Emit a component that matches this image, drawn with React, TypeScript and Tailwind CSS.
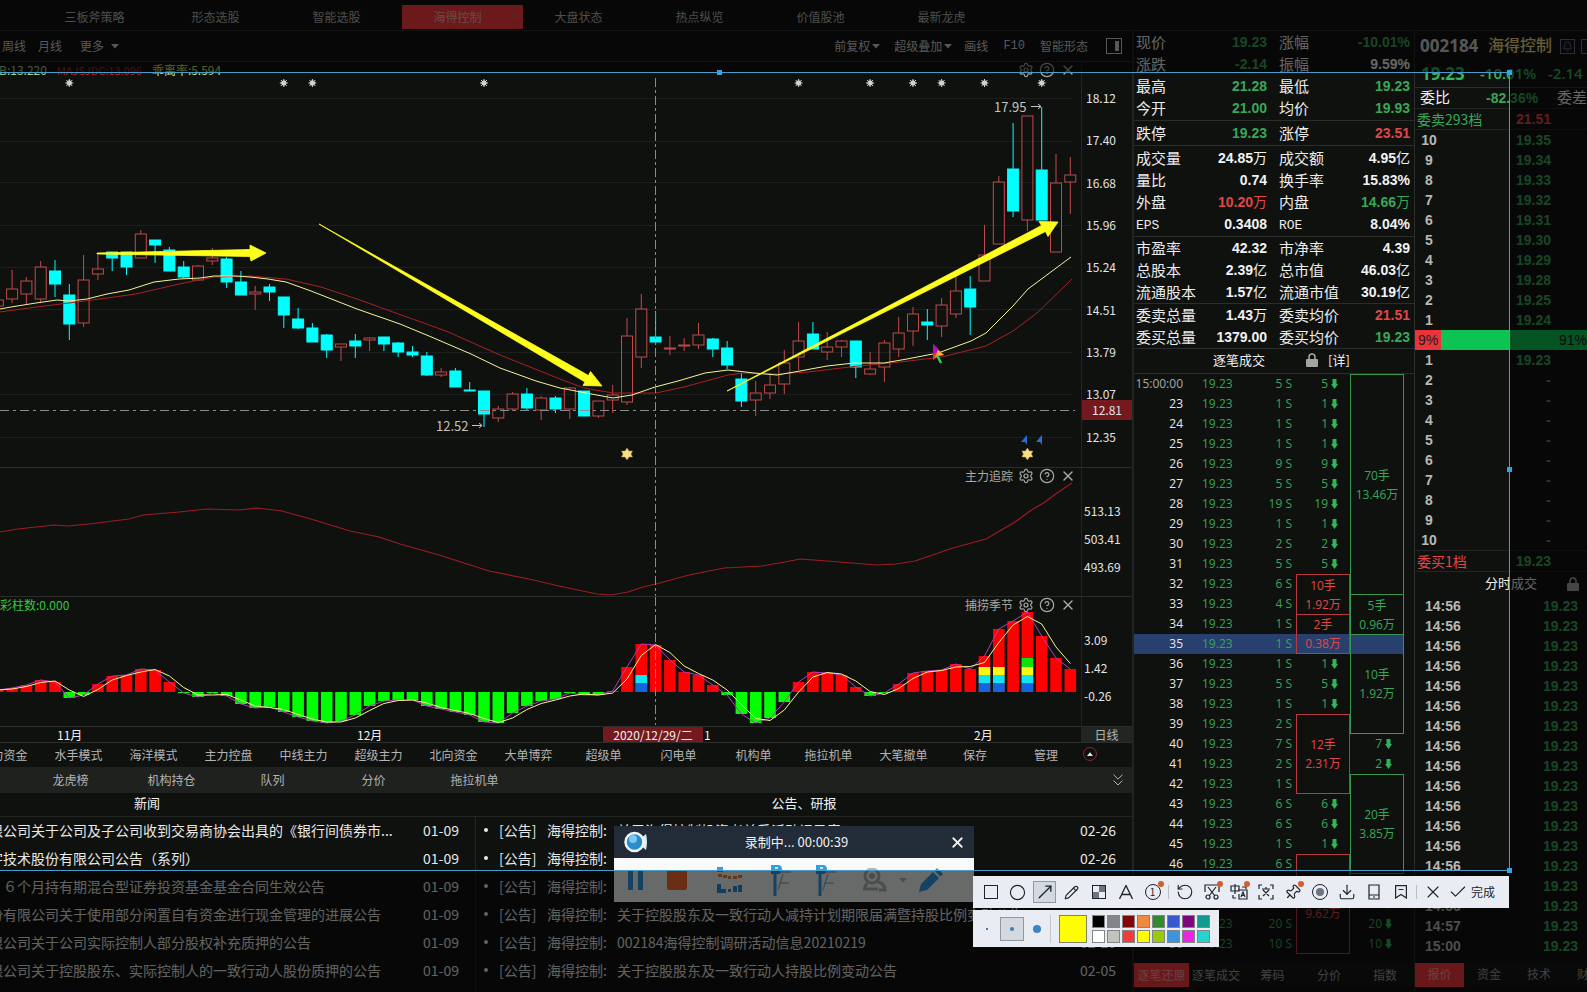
import type { ReactNode } from 'react'
import {
  Bell,
  Check,
  ChevronsDown,
  Circle,
  CircleHelp,
  Download,
  MoveUpRight,
  Pencil,
  Pin,
  RotateCcw,
  Settings,
  Square,
  X,
} from 'lucide-react'

const TABS = ['板块选股', '三板斧策略', '形态选股', '智能选股', '海得控制', '大盘状态', '热点纵览', '价值股池', '最新龙虎']

// [kind, high, body top, body bottom, low]
type Candle = ['r' | 'c', number, number, number, number]

const CANDLES: Candle[] = [
  ['r', 300, 300, 306, 306], ['r', 270, 289, 299, 303], ['r', 277, 281, 294, 305], ['r', 261, 267, 299, 303],
  ['c', 260, 271, 284, 297], ['c', 284, 295, 324, 340], ['r', 255, 280, 323, 327], ['r', 255, 269, 274, 280],
  ['c', 252, 252, 258, 271], ['c', 252, 252, 267, 275], ['r', 230, 234, 258, 258], ['c', 240, 240, 245, 263],
  ['c', 247, 250, 271, 271], ['c', 261, 267, 277, 278], ['r', 265, 266, 280, 280], ['r', 248, 258, 261, 265],
  ['c', 257, 259, 282, 288], ['c', 271, 282, 295, 295], ['r', 286, 292, 294, 310], ['c', 284, 287, 292, 301],
  ['c', 297, 297, 315, 328], ['c', 308, 319, 328, 329], ['c', 323, 328, 342, 342], ['c', 334, 335, 350, 358],
  ['r', 344, 344, 347, 361], ['c', 334, 341, 346, 358], ['r', 337, 338, 340, 351], ['c', 337, 337, 344, 351],
  ['c', 342, 343, 352, 357], ['c', 346, 352, 355, 357], ['c', 352, 356, 375, 376], ['r', 368, 372, 375, 377],
  ['c', 368, 371, 387, 387], ['c', 382, 390, 391, 391], ['c', 391, 391, 414, 427], ['r', 406, 409, 418, 422],
  ['r', 392, 394, 409, 411], ['c', 388, 394, 408, 410], ['r', 396, 398, 410, 420], ['c', 396, 398, 409, 413],
  ['r', 387, 388, 409, 419], ['c', 391, 391, 416, 416], ['r', 401, 401, 416, 418], ['r', 385, 395, 400, 413],
  ['r', 318, 336, 402, 405], ['r', 294, 309, 357, 368], ['c', 311, 337, 342, 345], ['r', 336, 348, 349, 355],
  ['r', 338, 345, 346, 351], ['r', 323, 335, 345, 349], ['c', 338, 339, 349, 357], ['c', 341, 348, 365, 369],
  ['c', 373, 379, 401, 407], ['r', 381, 393, 400, 416], ['r', 373, 385, 393, 399], ['r', 350, 363, 384, 394],
  ['r', 322, 341, 357, 370], ['c', 322, 334, 349, 349], ['r', 332, 347, 352, 360], ['r', 340, 341, 347, 357],
  ['c', 341, 341, 367, 378], ['r', 352, 369, 374, 375], ['r', 340, 343, 367, 382], ['r', 317, 333, 349, 357],
  ['r', 307, 314, 331, 346], ['c', 309, 322, 325, 340], ['r', 298, 305, 326, 337], ['r', 276, 291, 314, 318],
  ['c', 276, 289, 307, 335], ['r', 225, 255, 281, 281], ['r', 176, 182, 244, 244], ['c', 123, 169, 211, 217],
  ['r', 116, 116, 220, 231], ['c', 107, 170, 220, 220], ['r', 154, 183, 252, 252], ['r', 157, 175, 182, 214],
]

const MACD = [
  690, 688, 685, 680, 682, 698, 695, 684, 676, 675, 669, 670, 682, 693, 697, 693, 696, 704, 708, 707, 712, 717, 721,
  723, 721, 715, 706, 701, 700, 700, 706, 709, 712, 715, 722, 723, 713, 706, 701, 699, 693, 695, 695, 691, 667, 644,
  645, 660, 672, 675, 685, 695, 714, 723, 718, 702, 682, 672, 673, 675, 687, 696, 693, 684, 673, 671, 670, 664, 669,
  656, 629, 621, 612, 636, 658, 669,
]
const ZERO = 692

const MA_FAST =
  '0,309 11,307 36,303 57,300 69,301 87,299 107,294 129,290 154,282 179,279 200,278 214,276 236,276 250,277 268,279 286,282 311,291 357,309 400,324 429,336 471,354 500,368 536,381 560,388 586,393 613,398 632,395 655,387 678,381 705,373 728,370 754,373 777,375 800,371 827,366 854,363 884,363 907,359 938,353 971,341 986,333 1013,306 1028,289 1071,257'
const MA_SLOW =
  '0,312 36,307 69,303 107,298 136,294 179,284 214,277 250,276 286,279 321,287 357,299 393,312 446,331 500,355 560,379 584,388 613,393 656,393 684,387 728,375 743,373 777,374 808,372 858,366 900,362 942,357 986,346 1013,331 1037,313 1072,279'
const TREND =
  '0,532 18,529 54,525 68,526 89,524 129,519 143,515 179,512 207,509 239,510 257,508 282,511 311,519 350,531 379,537 400,544 439,555 489,571 529,579 559,586 597,594 611,595 628,592 643,587 656,584 689,575 724,568 762,566 785,562 800,559 827,561 877,565 896,564 915,561 953,548 986,539 1015,522 1030,511 1045,502 1057,493 1072,483'

const cx = (i: number) => -2.2 + 14.3 * i

const STATS: [string, string, string, string, string, string][][] = [
  [
    ['现价', '19.23', 'g', '涨幅', '-10.01%', 'g'],
    ['涨跌', '-2.14', 'g', '振幅', '9.59%', 'w'],
    ['最高', '21.28', 'g', '最低', '19.23', 'g'],
    ['今开', '21.00', 'g', '均价', '19.93', 'g'],
  ],
  [['跌停', '19.23', 'g', '涨停', '23.51', 'r']],
  [
    ['成交量', '24.85万', 'w', '成交额', '4.95亿', 'w'],
    ['量比', '0.74', 'w', '换手率', '15.83%', 'w'],
    ['外盘', '10.20万', 'r', '内盘', '14.66万', 'g'],
    ['EPS', '0.3408', 'w', 'ROE', '8.04%', 'w'],
  ],
  [
    ['市盈率', '42.32', 'w', '市净率', '4.39', 'w'],
    ['总股本', '2.39亿', 'w', '总市值', '46.03亿', 'w'],
    ['流通股本', '1.57亿', 'w', '流通市值', '30.19亿', 'w'],
  ],
  [
    ['委卖总量', '1.43万', 'w', '委卖均价', '21.51', 'r'],
    ['委买总量', '1379.00', 'w', '委买均价', '19.23', 'g'],
  ],
]
const GROUP_PAD = ['pb-px', 'py-px', 'py-px', '', '']
const TONE: Record<string, string> = { g: 'text-[#3aa657]', r: 'text-[#e0474a]', w: 'text-[#f2f2f2]' }

type Merge = { span: number; lots: string; sum: string; last?: boolean; fill?: string }
type Tick = { t: string; v: string; a?: string | Merge; b?: string | Merge }

const TICKS: Tick[] = [
  { t: '15:00:00', v: '5', a: '5', b: { span: 11, lots: '70手', sum: '13.46万' } },
  { t: '23', v: '1', a: '1' },
  { t: '24', v: '1', a: '1' },
  { t: '25', v: '1', a: '1' },
  { t: '26', v: '9', a: '9' },
  { t: '27', v: '5', a: '5' },
  { t: '28', v: '19', a: '19' },
  { t: '29', v: '1', a: '1' },
  { t: '30', v: '2', a: '2' },
  { t: '31', v: '5', a: '5' },
  { t: '32', v: '6', a: { span: 2, lots: '10手', sum: '1.92万' } },
  { t: '33', v: '4', b: { span: 2, lots: '5手', sum: '0.96万' } },
  {
    t: '34',
    v: '1',
    a: { span: 2, lots: '2手', sum: '0.38万', last: true, fill: 'bg-[linear-gradient(transparent_19px,#28406e_19px)]' },
  },
  {
    t: '35',
    v: '1',
    b: { span: 5, lots: '10手', sum: '1.92万', last: true, fill: 'bg-[linear-gradient(#28406e_19px,#0f110f_19px)]' },
  },
  { t: '36', v: '1', a: '1' },
  { t: '37', v: '5', a: '5' },
  { t: '38', v: '1', a: '1' },
  { t: '39', v: '2', a: { span: 4, lots: '12手', sum: '2.31万', last: true } },
  { t: '40', v: '7', b: '7' },
  { t: '41', v: '2', b: '2' },
  { t: '42', v: '1', b: { span: 5, lots: '20手', sum: '3.85万', last: true } },
  { t: '43', v: '6', a: '6' },
  { t: '44', v: '6', a: '6' },
  { t: '45', v: '1', a: '1' },
  { t: '46', v: '6', a: { span: 5, lots: '50手', sum: '9.62万', last: true } },
  { t: '47', v: '4', b: '4' },
  { t: '48', v: '10', b: '10' },
  { t: '49', v: '20', b: '20' },
  { t: '50', v: '10', b: '10' },
]

const ASKS = [
  ['10', '19.35'], ['9', '19.34'], ['8', '19.33'], ['7', '19.32'], ['6', '19.31'],
  ['5', '19.30'], ['4', '19.29'], ['3', '19.28'], ['2', '19.25'], ['1', '19.24'],
]
const BIDS = [
  ['1', '19.23'], ['2', '-'], ['3', '-'], ['4', '-'], ['5', '-'],
  ['6', '-'], ['7', '-'], ['8', '-'], ['9', '-'], ['10', '-'],
]
const TRADES = [...Array(16).fill('14:56'), '14:57', '15:00'] as string[]

const INDICATORS = [
  '主力资金', '水手模式', '海洋模式', '主力控盘', '中线主力', '超级主力', '北向资金',
  '大单博弈', '超级单', '闪电单', '机构单', '拖拉机单', '大笔撤单',
]

const NEWS = [
  '限公司关于公司及子公司收到交易商协会出具的《银行间债券市...',
  '字技术股份有限公司公告（系列）',
  '２６个月持有期混合型证券投资基金基金合同生效公告',
  '份有限公司关于使用部分闲置自有资金进行现金管理的进展公告',
  '限公司关于公司实际控制人部分股权补充质押的公告',
  '限公司关于控股股东、实际控制人的一致行动人股份质押的公告',
]
const NOTICES = [
  ['关于海得控制投资者关系活动记录表', '02-26'],
  ['关于控股股东股份变动公告', '02-26'],
  ['关于权益变动的提示公告', '02-26'],
  ['关于控股股东及一致行动人减持计划期限届满暨持股比例变动公告', '02-26'],
  ['002184海得控制调研活动信息20210219', '02-20'],
  ['关于控股股东及一致行动人持股比例变动公告', '02-05'],
]

const SWATCHES = [
  'bg-black', 'bg-[#84858a]', 'bg-[#840408]', 'bg-[#f08840]', 'bg-[#348830]', 'bg-[#3858d0]', 'bg-[#80047c]', 'bg-[#109a90]',
  'bg-white', 'bg-[#c0c4c0]', 'bg-[#f03c3c]', 'bg-[#ffff00]', 'bg-[#98cc08]', 'bg-[#3c94dc]', 'bg-[#ec24e4]', 'bg-[#24d4d0]',
]

function Caret() {
  return (
    <svg viewBox="0 0 8 5" className="h-[5px] w-2 fill-current">
      <path d="M0 0h8L4 4.5z" />
    </svg>
  )
}

function DownArrow() {
  return (
    <svg viewBox="0 0 7 10" className="h-[10px] w-[7px] fill-[#2fb457]">
      <path d="M1.500 0h4v5h1.500L3.500 10 0 5h1.500z" />
    </svg>
  )
}

function Padlock() {
  return (
    <svg viewBox="0 0 12 14" className="h-[14px] w-3">
      <path d="M3 7V4Q3 1 6 1T9 4V7" fill="none" stroke="#a4a4a4" strokeWidth={1.6} />
      <rect y={6} width={12} height={8} rx={1} fill="#a4a4a4" />
    </svg>
  )
}

function PanelTools({ title }: { title?: string }) {
  return (
    <div className="absolute top-0 right-[5px] flex h-4 items-center gap-[5px] text-xs text-[#a8a8a8]">
      {title && <span>{title}</span>}
      <button aria-label="设置"><Settings size={16} strokeWidth={1.8} /></button>
      <button aria-label="帮助"><CircleHelp size={16} strokeWidth={1.8} /></button>
      <button aria-label="关闭"><X size={16} strokeWidth={2} /></button>
    </div>
  )
}

function ChartPanel({ children, axis, tools }: { children: ReactNode; axis: ReactNode; tools: ReactNode }) {
  return (
    <div className="flex border-b border-[#2b2d2b]">
      <div className="relative min-w-0 flex-1">
        {children}
        {tools}
      </div>
      <div className="relative w-[51px] border-l border-[#222422] text-xs text-[#e4e4e4]">{axis}</div>
    </div>
  )
}

function Crosshair({ y1, y2 }: { y1: number; y2: number }) {
  return <line x1={655.5} x2={655.5} y1={y1} y2={y2} stroke="#8a8c8a" strokeDasharray="9 3 3 3" />
}

function KLine() {
  return (
    <svg viewBox="0 62 1081 405" preserveAspectRatio="none" className="block h-[405px] w-full">
      {[98.5, 141.5, 182.5, 225.5, 267.5, 309.5, 352.5, 394.5, 437.5].map((y) => (
        <line key={y} x1={0} x2={1072} y1={y} y2={y} stroke="#1c1f1d" />
      ))}
      {[5, 20, 22, 34, 56, 61, 64, 66, 69, 73].map((i) => (
        <g key={i} transform={`translate(${cx(i)} 83)`} stroke="#d0d0d0">
          <circle r={2.2} fill="#e0e0e0" />
          <path d="M-4 0H4M0-4V4M-3-3L3 3M3-3L-3 3" />
        </g>
      ))}
      {CANDLES.map(([kind, hi, top, bot, lo], i) => {
        const x = cx(i)
        const color = kind === 'c' ? '#00ffff' : '#c04a4a'
        return (
          <g key={i} stroke={color}>
            <path d={`M${x} ${hi}V${top}M${x} ${bot}V${lo}`} />
            <rect
              x={x - 5.5}
              y={top}
              width={11}
              height={bot - top}
              fill={kind === 'c' ? color : 'none'}
            />
          </g>
        )
      })}
      <polyline points={MA_SLOW} fill="none" stroke="#a82024" />
      <polyline points={MA_FAST} fill="none" stroke="#f4f49a" />
      <line x1={0} x2={1075} y1={410.5} y2={410.5} stroke="#8a8c8a" strokeDasharray="9 4 3 4" />
      <Crosshair y1={78} y2={467} />
      {/* hand drawn trend arrows */}
      <g fill="#ffff1e" stroke="#ffff1e" strokeWidth={0.8}>
        <path d="M97 253L250 249.500V245L266 253L251 261L250 256.500L97 254z" />
        <path d="M319 224L588.5 375.5L590.5 371.5L602 386L583 385.5L585 382z" />
        <path d="M727 391L1041.5 225.500L1039 221.5L1058 222L1048 236.5L1045.5 231.500z" />
      </g>
      <g fill="#f7df86" stroke="#b98a30" strokeWidth={0.5}>
        {[44, 72].map((i) => (
          <path key={i} transform={`translate(${cx(i)} 454)`} d="M0-6L2-3H5.5L4 0L5.5 3H2L0 6L-2 3H-5.500L-4 0L-5.500-3H-2z" />
        ))}
      </g>
      <g fill="#2a6ed8">
        <path d="M1021 442L1027 435V445L1025 442z" />
        <path d="M1036 442L1042 435V445L1040 442z" />
      </g>
      <g fontSize={13} fill="#c4c4c4">
        <text x={436} y={431}>12.52</text>
        <text x={994} y={112}>17.95</text>
      </g>
      <g stroke="#c4c4c4" fill="none">
        <path d="M472 425.500H482M479 423L482 425.500L479 428" />
        <path d="M1031 106.500H1041M1038 104L1041 106.500L1038 109" />
      </g>
      {/* pointer */}
      <path d="M933 344L944 355L938 356L933 360z" fill="#ff3030" />
      <path d="M933 344L939 350L933 355z" fill="#b010d0" />
      <path d="M938 356L944 355L938 350L935 358z" fill="#ffb040" />
      <path d="M937 355L941 363" stroke="#30d060" strokeWidth={2.5} />
    </svg>
  )
}

function Macd() {
  const dif = MACD.map((y, i) => `${cx(i)},${y}`).join(' ')
  const dea = MACD.map((y, i) => `${cx(i)},${(y + MACD[Math.max(i - 1, 0)]) / 2}`).join(' ')
  return (
    <svg viewBox="0 597 1081 129" preserveAspectRatio="none" className="block h-[129px] w-full">
      {MACD.map((y, i) => (
        <rect
          key={i}
          x={cx(i) - 5.8}
          y={Math.min(y, ZERO)}
          width={11.6}
          height={Math.max(1, Math.abs(y - ZERO))}
          fill={y < ZERO ? '#ff0000' : '#00ff00'}
        />
      ))}
      {[45, 69, 70, 72].map((i) => (
        <g key={i}>
          <rect x={cx(i) - 5.8} y={683} width={11.6} height={9} fill="#1464e0" />
          <rect x={cx(i) - 5.8} y={675} width={11.6} height={8} fill="#10e4f0" />
          {i > 45 && <rect x={cx(i) - 5.8} y={667} width={11.6} height={8} fill="#f8f810" />}
          {i === 72 && <rect x={cx(i) - 5.8} y={658} width={11.6} height={9} fill="#10e010" />}
        </g>
      ))}
      <polyline points={dif} fill="none" stroke="#b03cb8" />
      <polyline points={dea} fill="none" stroke="#fbf58c" />
      <Crosshair y1={597} y2={725} />
    </svg>
  )
}

function ChartColumn() {
  return (
    <section className="flex min-w-0 flex-1 flex-col">
      <div className="flex h-[31px] items-center border-b border-[#2b2d2b] text-xs text-[#d0d0d0]">
        <div className="flex items-center pl-[2px]">
          <button>周线</button>
          <button className="ml-3">月线</button>
          <button className="ml-[18px] flex items-center gap-[7px]">更多 <Caret /></button>
        </div>
        <div className="ml-auto flex items-center pr-[10px]">
          <button className="flex items-center gap-[2px]">前复权 <Caret /></button>
          <button className="ml-[14px] flex items-center gap-[2px]">超级叠加 <Caret /></button>
          <button className="ml-[12px]">画线</button>
          <button className="ml-[15px] font-['Liberation_Mono',monospace]">F10</button>
          <button className="ml-[15px]">智能形态</button>
          <button aria-label="侧栏" className="ml-[18px] flex h-4 w-4 items-center justify-end border border-current pr-[2px]">
            <span className="h-[10px] w-1 bg-current" />
          </button>
        </div>
      </div>

      <ChartPanel
        tools={
          <>
            <div className="absolute top-0 left-[-1px] flex h-4 items-center gap-[10px] text-xs">
              <span className="text-[#a9d084]">B:13.220</span>
              <span className="text-[11px] text-[#c02024]">MAJSJDC:13.096</span>
              <span className="text-[#c9e864]">乖离率:5.594</span>
            </div>
            <PanelTools />
          </>
        }
        axis={
          <>
            <div className="grid h-[396px] grid-rows-9 items-center pt-[15px] pl-1">
              {['18.12', '17.40', '16.68', '15.96', '15.24', '14.51', '13.79', '13.07', '12.35'].map((v) => (
                <span key={v}>{v}</span>
              ))}
            </div>
            <div className="absolute top-[338px] left-0 flex h-5 w-full items-center justify-center bg-[#741a1e]">12.81</div>
          </>
        }
      >
        <KLine />
      </ChartPanel>

      <ChartPanel
        tools={<PanelTools title="主力追踪" />}
        axis={
          <div className="flex flex-col pt-[29px] pl-[2px] leading-7">
            <span>513.13</span>
            <span>503.41</span>
            <span>493.69</span>
          </div>
        }
      >
        <svg viewBox="0 468 1081 128" preserveAspectRatio="none" className="block h-32 w-full">
          <polyline points={TREND} fill="none" stroke="#9c1c22" strokeWidth={1.2} />
          <Crosshair y1={468} y2={596} />
        </svg>
      </ChartPanel>

      <ChartPanel
        tools={
          <>
            <span className="absolute top-0 left-0 text-xs text-[#32c83c]">彩柱数:0.000</span>
            <PanelTools title="捕捞季节" />
          </>
        }
        axis={
          <div className="flex flex-col pt-[29px] pl-[2px] leading-7">
            <span>3.09</span>
            <span>1.42</span>
            <span>-0.26</span>
          </div>
        }
      >
        <Macd />
      </ChartPanel>

      <div className="flex h-4 border-b border-[#2b2d2b] text-xs leading-[15px] text-[#f0f0f0]">
        <div className="relative flex-1">
          <span className="absolute left-[57px]">11月</span>
          <span className="absolute left-[357px]">12月</span>
          <span className="absolute left-[603px] h-[15px] w-[100px] bg-[#741a1e] text-center">2020/12/29/二</span>
          <span className="absolute left-[704px]">1</span>
          <span className="absolute left-[974px]">2月</span>
        </div>
        <button className="w-[51px] bg-[#232523] text-[#b4b4b4]">日线</button>
      </div>

      <div className="flex h-6 items-center text-xs text-[#b4b4b4]">
        <div className="-ml-[34px] flex">
          {INDICATORS.map((name) => (
            <button key={name} className="w-[75px]">{name}</button>
          ))}
          <button className="w-[68px]">保存</button>
          <button className="w-[74px]">管理</button>
          <button aria-label="收起" className="flex h-[14px] w-[14px] items-center justify-center rounded-full border border-[#8c2430]">
            <svg viewBox="0 0 8 5" className="h-1 w-[6px] fill-[#e8e8e8]"><path d="M0 5h8L4 0z" /></svg>
          </button>
        </div>
      </div>

      <div className="flex h-[26px] items-center bg-[#1f211f] pl-5 text-xs text-[#b4b4b4]">
        {['龙虎榜', '机构持仓', '队列', '分价', '拖拉机单'].map((name) => (
          <button key={name} className="w-[101px]">{name}</button>
        ))}
        <button aria-label="展开" className="mr-1 ml-auto"><ChevronsDown size={20} strokeWidth={1.2} /></button>
      </div>

      <div className="flex h-6 items-center border-b border-[#232523] pb-[3px] text-[13px] text-[#f0f0f0]">
        <h3 className="w-[476px] pr-[182px] text-center">新闻</h3>
        <h3 className="flex-1 text-center">公告、研报</h3>
      </div>

      <div className="flex flex-1 text-sm text-[#e8e8e8]">
        <ul className="-ml-[11px] w-[487px] shrink-0 border-r border-[#232523]">
          {NEWS.map((title) => (
            <li key={title} className="flex h-7 items-center justify-between pr-4 pb-[2px]">
              <a href="#" className="whitespace-nowrap">{title}</a>
              <span>01-09</span>
            </li>
          ))}
        </ul>
        <ul className="min-w-0 flex-1">
          {NOTICES.map(([title, date]) => (
            <li key={title} className="flex h-7 items-center pr-4 pb-[2px] pl-2">
              <span className="mr-[11px] h-1 w-1 rounded-full bg-current" />
              <a href="#" className="flex whitespace-nowrap">
                <span className="w-[48px]">[公告]</span>
                <span className="w-[70px]">海得控制:</span>
                <span>{title}</span>
              </a>
              <span className="ml-auto">{date}</span>
            </li>
          ))}
        </ul>
      </div>
    </section>
  )
}

function Value({ text, tone }: { text: string; tone: string }) {
  return (
    <dd className={`text-right font-['Liberation_Sans','Noto_Sans_CJK_SC',sans-serif] text-sm font-bold ${TONE[tone]}`}>
      {text.replace(/[万亿]/, '')}
      <span className="font-normal">{text.match(/[万亿]/)?.[0]}</span>
    </dd>
  )
}

function Label({ text }: { text: string }) {
  const latin = /^[A-Z]/.test(text)
  return (
    <dt className={latin ? "pt-[3px] font-['Liberation_Mono',monospace] text-[13px]" : 'whitespace-nowrap'}>{text}</dt>
  )
}

function TickCell({ cell, side }: { cell?: string | Merge; side: 'a' | 'b' }) {
  if (!cell) return null
  if (typeof cell === 'string') {
    return (
      <td className="pr-3 text-[#3aa657]">
        <span className="flex items-center justify-end gap-[3px]">{cell}<DownArrow /></span>
      </td>
    )
  }
  const tone = side === 'a' ? 'border-[#b83a40] text-[#e0474a]' : 'border-[#35964f] text-[#3aa657]'
  return (
    <td
      rowSpan={cell.span}
      className={`border-x border-t text-center leading-[19px] ${cell.last ? 'border-b' : ''} ${tone} ${cell.fill ?? ''}`}
    >
      <div>{cell.lots}</div>
      <div>{cell.sum}</div>
    </td>
  )
}

function QuoteColumn() {
  return (
    <section className="flex w-[282px] shrink-0 flex-col border-l-2 border-[#222422]">
      {STATS.map((rows, g) => (
        <dl key={g} className={`border-b border-[#2b2d2b] ${GROUP_PAD[g]}`}>
          {rows.map(([l1, v1, t1, l2, v2, t2]) => (
            <div key={l1} className="flex h-[22px] gap-3 pr-1 pl-[2px] text-[15px] text-[#ececec]">
              <div className="flex w-[131px] items-center justify-between">
                <Label text={l1} />
                <Value text={v1} tone={t1} />
              </div>
              <div className="flex flex-1 items-center justify-between">
                <Label text={l2} />
                <Value text={v2} tone={t2} />
              </div>
            </div>
          ))}
        </dl>
      ))}
      <div className="flex h-[25px] items-center border-b border-[#2b2d2b] pb-[2px] pl-[79px] text-[13px] text-[#f0f0f0]">
        <h3>逐笔成交</h3>
        <span className="ml-[41px]"><Padlock /></span>
        <button className="ml-[10px]">[详]</button>
      </div>
      <table className="w-[270px] table-fixed border-separate border-spacing-0 font-['Open_Sans','Noto_Sans_CJK_SC',sans-serif] text-xs leading-5">
        <colgroup>
          <col className="w-[49px]" />
          <col className="w-[68px]" />
          <col className="w-[45px]" />
          <col className="w-[54px]" />
          <col className="w-[54px]" />
        </colgroup>
        <tbody>
          {TICKS.map((row, i) => {
            const fill = row.t === '35' ? 'bg-[#28406e]' : ''
            return (
              <tr key={row.t} className="h-5">
                <td className={`text-right ${i === 0 ? 'text-[#a8a8a8]' : 'text-[#e8e8e8]'} ${fill}`}>{row.t}</td>
                <td className={`pl-[19px] text-[#3aa657] ${fill}`}>19.23</td>
                <td className={`pr-1 text-right text-[#3aa657] ${fill}`}>{row.v} S</td>
                <TickCell cell={row.a} side="a" />
                <TickCell cell={row.b} side="b" />
              </tr>
            )
          })}
        </tbody>
      </table>
      <div className="mt-auto mb-[5px] flex h-6 items-center bg-[#151715] text-xs text-[#9c9c9c]">
        <button className="h-full w-[55px] bg-[#f83a40] text-[#ff9c9c]">逐笔还原</button>
        <button className="w-[54px]">逐笔成交</button>
        <button className="w-[59px]">筹码</button>
        <button className="w-[54px]">分价</button>
        <button className="w-[58px]">指数</button>
      </div>
    </section>
  )
}

function LadderRow({ level, price }: { level: string; price: string }) {
  return (
    <div className="flex h-5 items-center">
      <span className="w-7 text-center text-[#b8b8b8]">{level}</span>
      <span className="w-[108px] text-right text-[#3aa657]">{price}</span>
    </div>
  )
}

function DepthColumn() {
  return (
    <section className="flex w-[173px] shrink-0 flex-col overflow-hidden border-l border-[#2b2d2b] font-['Liberation_Sans','Noto_Sans_CJK_SC',sans-serif] text-sm font-bold whitespace-nowrap">
      <div className="flex h-[30px] items-center pl-[5px]">
        <span className="w-[68px] shrink-0 font-['Open_Sans',sans-serif] text-[17px] text-[#d0d0d0]">002184</span>
        <span className="w-[72px] shrink-0 text-base font-medium text-[#eedc80]">海得控制</span>
        <button aria-label="预警" className="flex h-[15px] w-[15px] shrink-0 items-center justify-center border border-[#66708c] text-[#66708c]">
          <Bell size={11} />
        </button>
        <button aria-label="自选" className="ml-[6px] h-[15px] w-[15px] shrink-0 border border-[#66708c]" />
      </div>
      <div className="flex h-[27px] items-center border-b border-[#2b2d2b] pl-[6px] font-['Open_Sans',sans-serif] text-[15px] text-[#34b45e]">
        <span className="w-[59px] text-[17px]">19.23</span>
        <span className="w-[68px] font-semibold">-10.01%</span>
        <span className="font-semibold">-2.14</span>
      </div>
      <div className="flex h-[21px] items-center border-b border-[#232523] pl-[5px]">
        <span className="w-[84px] text-[15px] font-normal text-[#f0f0f0]">委比</span>
        <span className="w-[51px] text-right text-[#3aa657]">-82.36%</span>
        <span className="ml-[20px] text-[15px] font-normal text-[#f0f0f0]">委差</span>
      </div>
      <div className="flex h-[21px] items-center border-b border-[#232523] pb-px pl-[2px]">
        <span className="w-[99px] font-['Noto_Sans_CJK_SC',sans-serif] font-normal text-[#3aa657]">委卖293档</span>
        <span className="text-[#e0474a]">21.51</span>
      </div>
      {ASKS.map(([level, price]) => <LadderRow key={level} level={level} price={price} />)}
      <div className="flex h-5 items-center text-[#1c1c1c]">
        <span className="flex h-full w-[26px] items-center justify-center bg-[#ea343c] font-normal">9%</span>
        <span className="flex h-full flex-1 items-center justify-end bg-[#0dc452] font-normal">91%</span>
      </div>
      {BIDS.map(([level, price]) => <LadderRow key={level} level={level} price={price} />)}
      <div className="flex h-[22px] items-center border-y border-[#232523] pb-px pl-[2px]">
        <span className="w-[99px] font-['Noto_Sans_CJK_SC',sans-serif] font-normal text-[#e0474a]">委买1档</span>
        <span className="text-[#3aa657]">19.23</span>
      </div>
      <div className="flex h-6 items-center pr-2 pl-[70px] text-[13px] font-normal text-[#f0f0f0]">
        <h3 className="mr-auto">分时成交</h3>
        <Padlock />
      </div>
      {TRADES.map((time, i) => (
        <div key={i} className="flex h-5 items-center justify-between pr-[9px] pl-[10px]">
          <span className="text-[#b8b8b8]">{time}</span>
          <span className="text-[#3aa657]">19.23</span>
        </div>
      ))}
      <div className="mt-auto mb-[5px] flex h-6 items-center bg-[#151715] text-xs font-normal text-[#9c9c9c]">
        <button className="h-full w-[49px] shrink-0 bg-[#f83a40] text-[#ff9c9c]">报价</button>
        <button className="w-[50px] shrink-0">资金</button>
        <button className="w-[50px] shrink-0">技术</button>
        <button className="w-[50px] shrink-0">财务</button>
      </div>
    </section>
  )
}

function FlagIcon() {
  return (
    <svg viewBox="0 0 24 32" className="h-8 w-6">
      <path d="M5 6V32" stroke="#2f9fe8" strokeWidth={3} />
      <path d="M1 1H8Q12 1 12 5.500T8 10H1z" fill="#2f9fe8" />
      <path d="M5 4H8" stroke="#fff" strokeWidth={1.5} />
      <path d="M10 8H21M9 19H19M13 10L8 26" stroke="#8ec4e0" strokeWidth={1.5} fill="none" />
    </svg>
  )
}

function Recorder() {
  return (
    <div className="absolute top-[826px] left-[614px] w-[360px]">
      <div className="flex h-8 items-center bg-[#222c38] pr-2 pl-[10px] text-[#f0f0f0]">
        <svg viewBox="0 0 24 24" className="h-6 w-6">
          <path d="M16 9L22 4Q24 12 22 20L16 15z" fill="#dcecf4" />
          <circle cx={10.500} cy={12} r={9} fill="#2a8ccc" stroke="#f0f6fa" strokeWidth={2.5} />
          <circle cx={9} cy={9} r={4} fill="#7cc8ee" />
        </svg>
        <span className="flex-1 pr-1 text-center text-[13px]">录制中... 00:00:39</span>
        <button aria-label="关闭"><X size={17} strokeWidth={2.5} /></button>
      </div>
      <div className="relative flex h-11 items-center bg-[#f8fafa] pl-2 text-[#2f9fe8]">
        <button aria-label="暂停" className="flex w-[26px] justify-center gap-[5px]">
          <span className="h-5 w-[5px] bg-current" />
          <span className="h-5 w-[5px] bg-current" />
        </button>
        <button aria-label="停止" className="ml-[19px] h-5 w-5 rounded-[2px] bg-[#ff6a30]" />
        <button aria-label="区域" className="ml-[30px]">
          <svg viewBox="0 0 26 26" className="h-[26px] w-[26px]">
            <path d="M0 0h6v5H0z" fill="#2f9fe8" />
            <path d="M1 7h4v3H1zM6 8h4v3H6zM11 9h3v3h-3zM16 9h4v3h-4zM21 8h4v3h-4z" fill="#f08038" />
            <path d="M0 17h4v5h5v4H0zM11 22h3v3h-3zM16 19h4v6h-4zM21 18h4v7h-4z" fill="#2f8fd8" />
          </svg>
        </button>
        <button aria-label="标记" className="ml-[27px]"><FlagIcon /></button>
        <button aria-label="书签" className="ml-[21px]"><FlagIcon /></button>
        <button aria-label="摄像头" className="ml-6">
          <svg viewBox="0 0 24 24" className="h-6 w-6" fill="none" stroke="#b4b8b8" strokeWidth={3}>
            <circle cx={9} cy={8} r={7} />
            <circle cx={9} cy={8} r={1.5} />
            <path d="M4 15L1 21H15M14 14Q21 14 22 22H16" />
          </svg>
        </button>
        <span className="ml-3 text-[#b4b8b8]"><Caret /></span>
        <button aria-label="画笔" className="ml-3">
          <svg viewBox="0 0 24 24" className="h-6 w-6" fill="#2f9fe8">
            <path d="M0 24L2 16L14 4L20 10L8 22zM15.500 2.500L18 0L24 6L21.500 8.500z" />
          </svg>
        </button>
      </div>
    </div>
  )
}

function Tool({ label, dot, active, children }: { label: string; dot?: boolean; active?: boolean; children: ReactNode }) {
  return (
    <button
      aria-label={label}
      className={`relative mx-[2px] flex h-[22px] w-[23px] items-center justify-center ${active ? 'border border-[#9098a0] bg-[#d4d8e0]' : ''}`}
    >
      {children}
      {dot && <span className="absolute top-0 right-0 h-[6px] w-[6px] rounded-full bg-[#d0602c]" />}
    </button>
  )
}

function AnnotateBar() {
  return (
    <div className="absolute right-[78px] bottom-[45px] flex w-[536px] flex-col items-start gap-[2px] text-[#1c242c]">
      <div className="flex h-8 w-full items-center bg-[#e9edf3] pl-1">
        <Tool label="矩形">
          <svg viewBox="0 0 14 14" className="h-[14px] w-[14px]" fill="none" stroke="currentColor">
            <rect x={0.5} y={0.5} width={13} height={13} />
          </svg>
        </Tool>
        <Tool label="椭圆"><Circle size={17} strokeWidth={1.6} /></Tool>
        <Tool label="箭头" active><MoveUpRight size={20} strokeWidth={1.6} /></Tool>
        <Tool label="画笔"><Pencil size={15} strokeWidth={1.8} /></Tool>
        <Tool label="马赛克">
          <svg viewBox="0 0 14 14" className="h-[14px] w-[14px]">
            <path d="M7 1h6v6H7zM1 7h6v6H1z" fill="#6c7480" />
            <rect x={0.5} y={0.5} width={13} height={13} fill="none" stroke="currentColor" />
          </svg>
        </Tool>
        <Tool label="文字">
          <svg viewBox="0 0 14 14" className="h-[14px] w-[14px]" fill="none" stroke="currentColor" strokeWidth={1.3}>
            <path d="M.5 14L7 .5L13.500 14M3 9.500H11" />
          </svg>
        </Tool>
        <Tool label="序号" dot>
          <span className="flex h-4 w-4 items-center justify-center rounded-full border border-current text-[10px] leading-none">1</span>
        </Tool>
        <span className="mx-[2px] h-[14px] w-px bg-[#b8bcc4]" />
        <Tool label="撤销"><RotateCcw size={18} strokeWidth={1.5} /></Tool>
        <Tool label="裁剪" dot>
          <svg viewBox="0 0 16 16" className="h-4 w-4" fill="none" stroke="currentColor" strokeWidth={1.2}>
            <path d="M1 8V1H15V8M4 3L11 12M12 3L5 12" />
            <circle cx={4} cy={13} r={2} />
            <circle cx={12} cy={13} r={2} />
          </svg>
        </Tool>
        <Tool label="翻译" dot>
          <svg viewBox="0 0 18 16" className="h-4 w-[18px]" fill="none" stroke="currentColor" strokeWidth={1.2}>
            <path d="M1 2H9V7H1zM5 0V10M12 3H16V5M3 11V14H6M8 6H17V15H9V10" />
            <path d="M11 13L13 8L15 13M11.500 11.500H14.500" />
          </svg>
        </Tool>
        <Tool label="识别文字">
          <svg viewBox="0 0 16 16" className="h-4 w-4" fill="none" stroke="currentColor" strokeWidth={1.2}>
            <path d="M1 5V1H4M12 1H15V5M15 11V15H12M4 15H1V11M4 5H12M8 3V5M5 6L11 12M11 6L5 12" />
          </svg>
        </Tool>
        <Tool label="钉住" dot><Pin size={17} strokeWidth={1.6} className="rotate-45" /></Tool>
        <Tool label="录屏">
          <span className="flex h-4 w-4 items-center justify-center rounded-full border border-current">
            <span className="h-2 w-2 rounded-full bg-[#6c7480]" />
          </span>
        </Tool>
        <Tool label="保存"><Download size={18} strokeWidth={1.5} /></Tool>
        <Tool label="手机">
          <svg viewBox="0 0 12 16" className="h-4 w-3" fill="none" stroke="currentColor" strokeWidth={1.2}>
            <path d="M1 1H11V15H1zM1 11H11M5 13H7" />
          </svg>
        </Tool>
        <Tool label="收藏">
          <svg viewBox="0 0 12 14" className="h-[14px] w-3" fill="none" stroke="currentColor" strokeWidth={1.2}>
            <path d="M.6 .6H11.400V13L6 9.500L.6 13zM3.500 4.500H8.500" />
          </svg>
        </Tool>
        <span className="mx-[2px] h-[14px] w-px bg-[#b8bcc4]" />
        <Tool label="取消"><X size={20} strokeWidth={1.3} /></Tool>
        <button className="ml-[2px] flex items-center gap-[3px] text-xs">
          <Check size={20} strokeWidth={1.3} />
          完成
        </button>
      </div>
      <div className="flex h-[37px] w-[246px] items-center bg-[#e9edf3]">
        <button aria-label="细" className="flex w-[27px] justify-center"><span className="h-[2px] w-[2px] bg-[#3c80bc]" /></button>
        <button aria-label="中" className="flex h-6 w-6 items-center justify-center border border-[#9098a0] bg-[#d4d8e0]">
          <span className="h-1 w-1 rounded-full bg-[#3c80bc]" />
        </button>
        <button aria-label="粗" className="flex w-[26px] justify-center"><span className="h-2 w-2 rounded-full bg-[#3c84c4]" /></button>
        <span className="mr-2 h-7 w-px bg-[#c4c8d0]" />
        <span className="h-7 w-7 border border-[#808468] bg-[#ffff00]" />
        <div className="ml-[5px] grid grid-cols-8 gap-[2px]">
          {SWATCHES.map((color) => (
            <button key={color} aria-label="颜色" className={`h-[13px] w-[13px] border border-[#848484] ${color}`} />
          ))}
        </div>
      </div>
    </div>
  )
}

function Selection() {
  return (
    <div className="pointer-events-none absolute top-[72px] right-[77px] bottom-[121px] -left-[67px] border border-[#4a9cc8] shadow-[0_0_0_2000px_rgba(0,0,0,0.58)]">
      <span className="absolute -top-[3px] left-1/2 h-[5px] w-[5px] -translate-x-full bg-[#38a4dc]" />
      <span className="absolute -top-[3px] -right-[3px] h-[5px] w-[5px] bg-[#38a4dc]" />
      <span className="absolute top-1/2 -right-[3px] h-[5px] w-[5px] -translate-y-full bg-[#38a4dc]" />
      <span className="absolute -right-[3px] -bottom-[3px] h-[5px] w-[5px] bg-[#38a4dc]" />
    </div>
  )
}

export default function App() {
  return (
    <div className="relative flex h-screen flex-col overflow-hidden bg-[#0f110f] font-['Noto_Sans_CJK_SC',sans-serif]">
      <nav className="flex h-[31px] items-end border-b border-[#2b2d2b] pb-px text-xs">
        <div className="-ml-[82px] flex">
          {TABS.map((tab) =>
            tab === '海得控制' ? (
              <button key={tab} className="relative h-6 w-[121px] bg-[#ff3c40] pr-[10px] text-[#ffb0a8]">
                {tab}
                <X size={12} className="absolute top-[6px] right-[2px] text-[#d06868]" />
              </button>
            ) : (
              <button key={tab} className="h-6 w-[121px] pr-[10px] text-[#b8b8b8]">{tab}</button>
            ),
          )}
        </div>
      </nav>
      <main className="flex min-h-0 flex-1">
        <ChartColumn />
        <QuoteColumn />
        <DepthColumn />
      </main>
      <Recorder />
      <Selection />
      <AnnotateBar />
    </div>
  )
}
